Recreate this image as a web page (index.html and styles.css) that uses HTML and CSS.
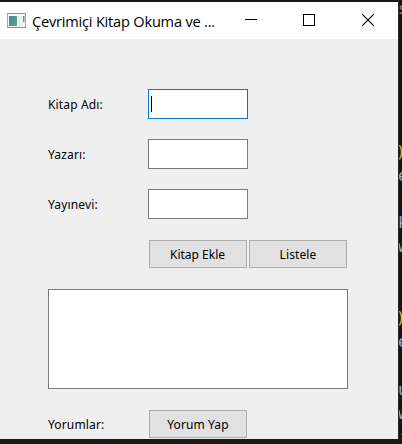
FILE: index.html
```html
<!DOCTYPE html>
<html lang="tr">
<head>
<meta charset="utf-8">
<title>Çevrimiçi Kitap Okuma ve ...</title>
<link rel="stylesheet" href="styles.css">
</head>
<body>
<main class="window">
  <header class="titlebar">
    <svg class="app-icon" width="19" height="16" viewBox="0 0 19 16">
      <defs><linearGradient id="g" x1="0" y1="0" x2="1" y2="1"><stop offset="0" stop-color="#4584a6"/><stop offset="1" stop-color="#58ae6e"/></linearGradient></defs>
      <rect x=".5" y=".5" width="18" height="14" fill="#f5f6f6" stroke="#a3a9b2"/>
      <path d="M0 .5H19M0 14.5H19" stroke="#8b929e"/>
      <rect x="2" y="3" width="8" height="10" fill="url(#g)"/>
      <rect x="11" y="3" width="4" height="10" fill="#e9ebec"/>
      <rect x="16" y="3" width="1.5" height="6" fill="url(#g)"/>
    </svg>
    <h1 class="title">Çevrimiçi Kitap Okuma ve ...</h1>
    <div class="controls">
      <svg width="12" height="12" viewBox="0 0 12 12"><path d="M0 5.5H12" stroke="#000"/></svg>
      <svg width="12" height="12" viewBox="0 0 12 12"><rect x=".5" y=".5" width="11" height="11" fill="none" stroke="#000"/></svg>
      <svg class="close" width="12" height="12" viewBox="0 0 12 12"><path d="M.2.2L11.8 11.8M11.8.2L.2 11.8" stroke="#000" stroke-width="1.1"/></svg>
    </div>
  </header>
  <section class="form">
    <div class="row"><span class="label">Kitap Adı:</span><div class="field focused"><i class="caret"></i></div></div>
    <div class="row"><span class="label">Yazarı:</span><div class="field"></div></div>
    <div class="row"><span class="label">Yayınevi:</span><div class="field"></div></div>
    <div class="actions"><button class="button add">Kitap Ekle</button><button class="button">Listele</button></div>
    <div class="list"></div>
    <div class="comments"><span class="label">Yorumlar:</span><button class="button">Yorum Yap</button></div>
  </section>
</main>
<aside class="editor">
  <span class="string">s</span><span></span><span></span><span></span><span></span><span></span>
  <span class="bracket">)</span><span>e</span><span></span><span>k</span><span>w</span><span></span><span></span>
  <span class="bracket">)</span><span>e</span><span></span><span>u</span><span>w</span>
  <div class="rule"></div>
</aside>
</body>
</html>
```
FILE: styles.css
```css
* { box-sizing: border-box; }
body {
  margin: 0;
  width: 402px;
  height: 444px;
  padding-top: 2px;
  display: flex;
  overflow: hidden;
  background: #191919;
  color: #000;
  font-family: "Noto Sans", sans-serif;
}
.window { width: 398px; height: 437px; flex: none; background: #efefef; }
.titlebar {
  height: 37px;
  display: flex;
  align-items: center;
  padding: 0 24px 0 7px;
  background: #fff;
}
.app-icon { flex: none; margin-top: 1px; }
.title {
  margin: 0 0 0 6px;
  font: 400 14.6px/20px "Open Sans", sans-serif;
  letter-spacing: -0.21px;
  white-space: nowrap;
}
.controls { display: flex; gap: 46px; margin: -1px 0 0 auto; }
.controls svg { display: block; }
.controls .close { margin-left: 1px; }
.form { padding: 50px 50px 0 48px; font-size: 12px; line-height: 16px; }
.row { height: 30px; margin-bottom: 20px; display: flex; align-items: center; }
.label { width: 100px; padding-top: 2px; letter-spacing: 0.15px; white-space: nowrap; }
.field { width: 100px; height: 30px; padding: 6px 2px; border: 1px solid #7a7a7a; background: #fff; }
.focused { border-color: #0078d7; }
.caret { display: block; width: 1px; height: 16px; background: #000; }
.actions { display: flex; gap: 2px; margin: 21px 0 21px 101px; }
.button {
  width: 98px;
  height: 28px;
  padding: 2px 0 0;
  border: 1px solid #adadad;
  background: #e1e1e1;
  color: #000;
  font: inherit;
  letter-spacing: 0.1px;
}
.add { padding-right: 1px; letter-spacing: 0; }
.list { height: 100px; border: 1px solid #7a7a7a; background: #fff; }
.comments { height: 28px; margin-top: 21px; display: flex; align-items: center; }
.comments .label { width: 101px; }
.editor {
  width: 4px;
  height: 440px;
  overflow: hidden;
  padding-left: 1px;
  border-left: 1px solid #292929;
  background: #161616;
  color: #72b9df;
  font: 16px/23.8px "DejaVu Sans Mono", monospace;
  margin-top: -5px;
}
.editor span { display: block; height: 23.8px; margin-left: -2px; }
.editor .string { color: #b87860; }
.editor .bracket { color: #d9bf20; margin-left: -4px; }
.rule { height: 1px; margin-top: 9px; background: #3a3a3a; }
```
